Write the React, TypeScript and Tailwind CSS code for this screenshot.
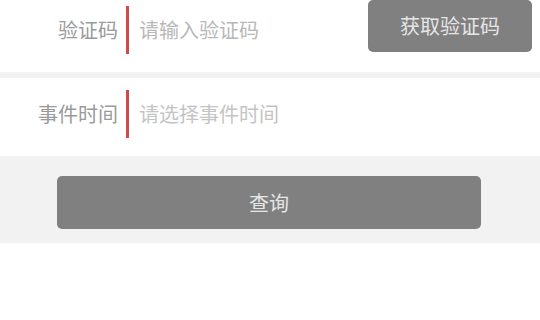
export default function App() {
  return (
    <div
      className="h-[320px] w-[540px] overflow-hidden bg-white"
      style={{ fontFamily: '"Noto Sans CJK SC", "Noto Sans", sans-serif' }}
    >
      <div className="-mt-[6px]">
        <div className="flex h-[78px] items-center pb-[6px]">
          <span className="w-[118px] text-right text-[20px] text-[#9a9a9a]">验证码</span>
          <span className="ml-[8px] h-[48px] w-[3px] bg-[#d0494b]" />
          <span className="ml-[10px] flex-1 text-[20px] text-[#b8b8b8]">请输入验证码</span>
          <button
            type="button"
            className="mr-[8px] mt-[6px] h-[52px] w-[164px] self-start rounded-[5px] bg-[#808080] text-[20px] text-[#e6e6e6]"
          >
            获取验证码
          </button>
        </div>
        <div className="h-[6px] bg-[#f2f2f2]" />
        <div className="flex h-[78px] items-center pb-[6px]">
          <span className="w-[118px] text-right text-[20px] text-[#9a9a9a]">事件时间</span>
          <span className="ml-[8px] h-[48px] w-[3px] bg-[#d0494b]" />
          <span className="ml-[10px] flex-1 text-[20px] text-[#c4c4c4]">请选择事件时间</span>
        </div>
        <div className="flex h-[87px] items-start justify-center bg-[#f2f2f2] pt-[20px]">
          <button
            type="button"
            className="h-[53px] w-[424px] -translate-x-[1px] rounded-[5px] bg-[#808080] text-[20px] text-[#e6e6e6]"
          >
            查询
          </button>
        </div>
      </div>
    </div>
  );
}
